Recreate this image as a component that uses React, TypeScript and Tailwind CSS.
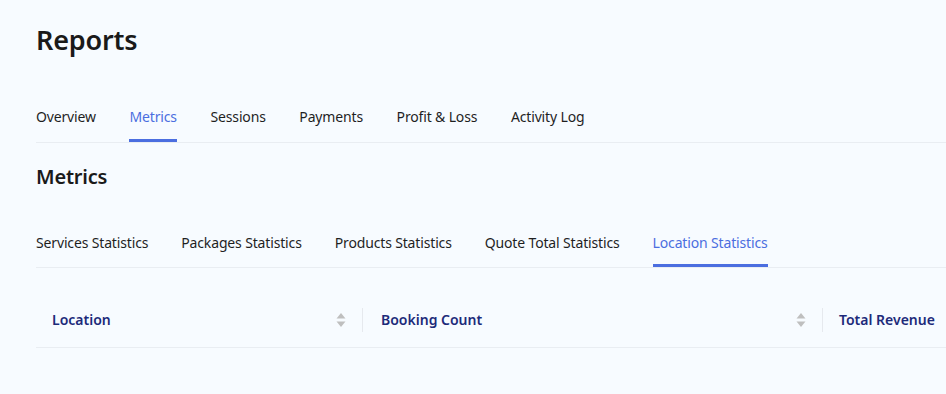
import React from "react";

const mainTabs = ["Overview", "Metrics", "Sessions", "Payments", "Profit & Loss", "Activity Log"];
const subTabs = ["Services Statistics", "Packages Statistics", "Products Statistics", "Quote Total Statistics", "Location Statistics"];

function SortIcon() {
  return (
    <svg width="10" height="16" viewBox="0 0 10 16" className="shrink-0">
      <path d="M5 1 L9.5 6.5 H0.5 Z" fill="#bfbfbf" />
      <path d="M5 15 L9.5 9.5 H0.5 Z" fill="#bfbfbf" />
    </svg>
  );
}

export default function App() {
  return (
    <div
      className="min-h-screen w-full overflow-hidden bg-[#f7fbff] pl-[36px] text-[#1f1f1f]"
      style={{ fontFamily: '"Noto Sans", "Open Sans", sans-serif' }}
    >
      <h1 className="pt-[20px] text-[27px] font-semibold leading-[40px] tracking-[-0.2px] text-[#1a1a1a]">Reports</h1>

      {/* main tabs */}
      <div className="mt-[45px] flex gap-[33.6px] border-b border-[#e9edf2]">
        {mainTabs.map((t) => (
          <div
            key={t}
            className={
              "border-b-[3px] pb-[12px] pt-[2px] text-[14px] leading-[20px] tracking-[-0.15px] " +
              (t === "Metrics" ? "border-[#4b6ee0] text-[#4b6ee0]" : "border-transparent text-[#1f1f1f]")
            }
          >
            {t}
          </div>
        ))}
      </div>

      <h2 className="mt-[20px] text-[20px] font-semibold leading-[28px] tracking-[-0.2px] text-[#1a1a1a]">Metrics</h2>

      {/* sub tabs */}
      <div className="mt-[42px] flex gap-[33px] border-b border-[#e9edf2]">
        {subTabs.map((t) => (
          <div
            key={t}
            className={
              "border-b-[3px] pb-[11px] text-[14px] leading-[20px] tracking-[-0.15px] " +
              (t === "Location Statistics" ? "border-[#4b6ee0] text-[#4b6ee0]" : "border-transparent text-[#1f1f1f]")
            }
          >
            {t}
          </div>
        ))}
      </div>

      {/* table header */}
      <div className="mt-[24px] flex w-[1100px] border-b border-[#e9edf2] text-[14px] font-semibold text-[#1c2a7a]">
        <div className="flex h-[55px] w-[326px] items-center justify-between pl-[16px] pr-[16px]">
          <span>Location</span>
          <SortIcon />
        </div>
        <div className="my-auto h-[24px] w-px bg-[#e6e9ee]" />
        <div className="flex h-[55px] w-[459px] items-center justify-between pl-[18px] pr-[16px]">
          <span>Booking Count</span>
          <SortIcon />
        </div>
        <div className="my-auto h-[24px] w-px bg-[#e6e9ee]" />
        <div className="flex h-[55px] flex-1 items-center pl-[16px]">
          <span>Total Revenue</span>
        </div>
      </div>
    </div>
  );
}
